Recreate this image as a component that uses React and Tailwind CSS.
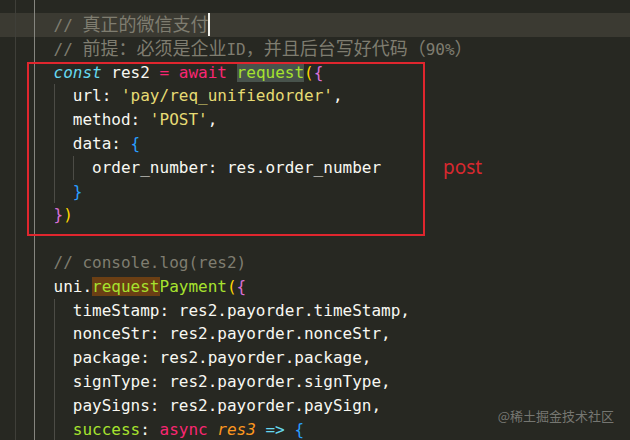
import React from 'react';

const C = {
  w: 'text-[#f8f8f2]',
  cm: 'text-[#7f7d70]',
  pk: 'text-[#f92672]',
  cy: 'text-[#66d9ef] italic',
  gr: 'text-[#a6e22e]',
  st: 'text-[#e6db74]',
  or: 'text-[#fd971f] italic',
  y: 'text-[#ffd700]',
  pu: 'text-[#da70d6]',
  bl: 'text-[#2a9fff]',
  ar: 'text-[#66d9ef]',
};

// CJK glyphs are a bit wider than the mono cell in the shot
const Cjk = ({ children }) => <span className="text-[18px]">{children}</span>;

const T = ({ c, children }) => <span className={c}>{children}</span>;

const lines = [
  { part: true },
  {
    active: true,
    body: (
      <>
        <T c={C.cm}>// <Cjk>真正的微信支付</Cjk></T>
        <span className="inline-block h-[23px] w-[2px] bg-[#f0f0ea] align-top" />
      </>
    ),
  },
  {
    body: (
      <T c={C.cm}>
        // <Cjk>前提：必须是企业</Cjk>ID<Cjk>，并且后台写好代码（</Cjk>90%<Cjk>）</Cjk>
      </T>
    ),
  },
  {
    body: (
      <>
        <T c={C.cy}>const</T> <T c={C.w}>res2</T> <T c={C.pk}>=</T> <T c={C.pk}>await</T>{' '}
        <span className="bg-[#48534c] text-[#a6e22e]">request</span>
        <T c={C.y}>(</T>
        <T c={C.pu}>{'{'}</T>
      </>
    ),
  },
  {
    ind: [0],
    body: (
      <>
        <T c={C.w}>url: </T>
        <T c={C.st}>'pay/req_unifiedorder'</T>
        <T c={C.w}>,</T>
      </>
    ),
  },
  {
    ind: [0],
    body: (
      <>
        <T c={C.w}>method: </T>
        <T c={C.st}>'POST'</T>
        <T c={C.w}>,</T>
      </>
    ),
  },
  {
    ind: [0],
    body: (
      <>
        <T c={C.w}>data: </T>
        <T c={C.bl}>{'{'}</T>
      </>
    ),
  },
  {
    ind: [0, 1],
    body: <T c={C.w}>order_number: res.order_number</T>,
  },
  {
    ind: [0],
    body: <T c={C.bl}>{'}'}</T>,
  },
  {
    body: (
      <>
        <T c={C.pu}>{'}'}</T>
        <T c={C.y}>)</T>
      </>
    ),
  },
  { body: null },
  { body: <T c={C.cm}>// console.log(res2)</T> },
  {
    body: (
      <>
        <T c={C.w}>uni.</T>
        <span className="bg-[#6b3f14] text-[#a6e22e]">request</span>
        <T c={C.gr}>Payment</T>
        <T c={C.y}>(</T>
        <T c={C.pu}>{'{'}</T>
      </>
    ),
  },
  { ind: [0], body: <T c={C.w}>timeStamp: res2.payorder.timeStamp,</T> },
  { ind: [0], body: <T c={C.w}>nonceStr: res2.payorder.nonceStr,</T> },
  { ind: [0], body: <T c={C.w}>package: res2.payorder.package,</T> },
  { ind: [0], body: <T c={C.w}>signType: res2.payorder.signType,</T> },
  { ind: [0], body: <T c={C.w}>paySigns: res2.payorder.paySign,</T> },
  {
    ind: [0],
    body: (
      <>
        <T c={C.gr}>success</T>
        <T c={C.w}>: </T>
        <T c={C.pk}>async</T> <T c={C.or}>res3</T> <T c={C.ar}>=&gt;</T> <T c={C.bl}>{'{'}</T>
      </>
    ),
  },
];

const Line = ({ line }) => {
  const ind = line.ind || [];
  return (
    <div
      className={`flex pl-[15px] leading-[23.8px] ${line.part ? 'h-[13px]' : 'h-[23.8px]'} ${
        line.active ? 'bg-[#3b3a32]' : ''
      }`}
    >
      <span className="w-[2ch] shrink-0 border-l border-[#3f3f39]" />
      <span className="w-[2ch] shrink-0 border-l border-[#85857f]" />
      {ind.map((i) => (
        <span key={i} className="w-[2ch] shrink-0 border-l border-[#4c4c46]" />
      ))}
      <span className="whitespace-pre">{line.body}</span>
    </div>
  );
};

export default function App() {
  return (
    <div
      className="relative h-[440px] w-[630px] overflow-hidden bg-[#272822] text-[16px] text-[#f8f8f2]"
      style={{ fontFamily: '"DejaVu Sans Mono", "Noto Sans CJK SC", monospace' }}
    >
      {lines.map((l, i) => (
        <Line key={i} line={l} />
      ))}

      {/* red annotation box */}
      <div className="absolute left-[27px] top-[62px] h-[174px] w-[398px] border-2 border-[#e0262e]" />
      <div
        className="absolute left-[443px] top-[155px] text-[19px] leading-[24px] text-[#d8282f]"
        style={{ fontFamily: '"Noto Sans", sans-serif' }}
      >
        post
      </div>

      {/* watermark */}
      <div
        className="absolute right-[16px] top-[407px] text-[13px] leading-[18px] text-[#8c8c88]/80"
        style={{ fontFamily: '"Noto Sans CJK SC", sans-serif' }}
      >
        @稀土掘金技术社区
      </div>
    </div>
  );
}
